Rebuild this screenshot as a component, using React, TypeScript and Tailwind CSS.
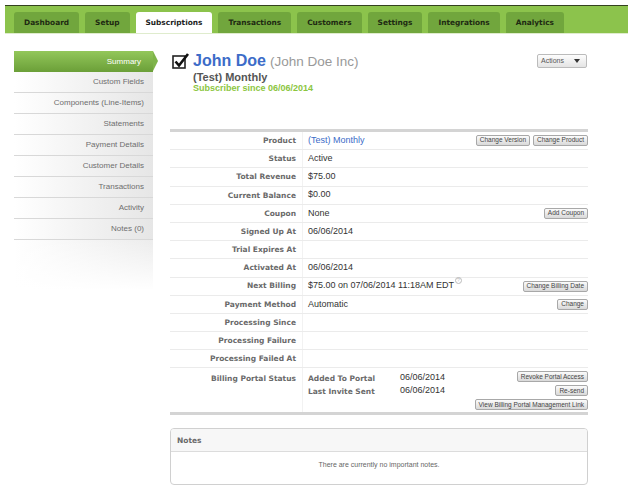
const tabs = ['Dashboard', 'Setup', 'Subscriptions', 'Transactions', 'Customers', 'Settings', 'Integrations', 'Analytics']

const sideItems = [
  'Custom Fields',
  'Components (Line-Items)',
  'Statements',
  'Payment Details',
  'Customer Details',
  'Transactions',
  'Activity',
  'Notes (0)',
]

type Row = { label: string; value?: React.ReactNode; buttons?: string[] }

function Btn({ children }: { children: React.ReactNode }) {
  return (
    <button className="h-[11px] whitespace-nowrap rounded-[2px] border border-[#a8a8a8] bg-linear-to-b from-[#fbfbfb] to-[#d9d9d9] px-[3px] font-['Liberation_Sans',sans-serif] text-[6.5px] leading-none text-[#444]">
      {children}
    </button>
  )
}

function CheckIcon() {
  return (
    <svg width="18" height="16" viewBox="0 0 18 16" className="shrink-0">
      <rect x="1" y="3" width="12" height="12" fill="#fff" stroke="#222" strokeWidth="1.6" />
      <path d="M3.5 8.5 L7 12.5 L16 1" fill="none" stroke="#111" strokeWidth="2.6" strokeLinejoin="miter" />
    </svg>
  )
}

export default function App() {
  const rows: Row[] = [
    {
      label: 'Product',
      value: <span className="text-[#3c6cc8]">(Test) Monthly</span>,
      buttons: ['Change Version', 'Change Product'],
    },
    { label: 'Status', value: 'Active' },
    { label: 'Total Revenue', value: '$75.00' },
    { label: 'Current Balance', value: '$0.00' },
    { label: 'Coupon', value: 'None', buttons: ['Add Coupon'] },
    { label: 'Signed Up At', value: '06/06/2014' },
    { label: 'Trial Expires At' },
    { label: 'Activated At', value: '06/06/2014' },
    {
      label: 'Next Billing',
      value: (
        <span className="flex items-start">
          $75.00 on 07/06/2014 11:18AM EDT
          <span className="ml-[1px] -mt-[2px] flex h-[7px] w-[7px] items-center justify-center rounded-full border border-[#bbb] text-[5px] leading-none text-[#bbb]">
            ?
          </span>
        </span>
      ),
      buttons: ['Change Billing Date'],
    },
    { label: 'Payment Method', value: 'Automatic', buttons: ['Change'] },
    { label: 'Processing Since' },
    { label: 'Processing Failure' },
    { label: 'Processing Failed At' },
  ]

  const labelCls = "font-['DejaVu_Sans',sans-serif] text-[7.5px] font-bold text-[#6a6a6a]"

  return (
    <div className="h-[499px] w-[639px] overflow-hidden bg-white font-['Liberation_Sans',Arial,sans-serif]">
      {/* top nav */}
      <div className="ml-[5px] mt-[5px] flex h-[28px] w-[623px] items-end gap-[6px] border-t border-[#34421f] bg-[#8cc34c] pl-[9px]">
        {tabs.map((t) => (
          <div
            key={t}
            className={`flex h-[21px] items-center rounded-t-[3px] px-[10px] font-['DejaVu_Sans',sans-serif] text-[7.4px] font-bold ${
              t === 'Subscriptions' ? 'bg-white text-[#222]' : 'bg-[#71a63d] text-[#1e2a12]'
            }`}
          >
            {t}
          </div>
        ))}
      </div>
      <div className="ml-[5px] h-px w-[623px] bg-[#dfeccd]" />

      <div className="mt-[17px] flex">
        {/* sidebar */}
        <div className="ml-[14px] w-[139px] shrink-0">
          <div className="relative flex h-[21px] items-center justify-end bg-linear-to-b from-[#93c75a] to-[#6b9f38] pr-[12px] text-[8px] text-white">
            Summary
            <div className="absolute -right-[5px] top-0 h-0 w-0 border-y-[10.5px] border-l-[5px] border-y-transparent border-l-[#7fb44a]" />
          </div>
          {sideItems.map((s) => (
            <div
              key={s}
              className="flex h-[21px] items-center justify-end border-b border-[#d8d8d8] bg-[linear-gradient(to_right,#ffffff,#e6e6e6)] pr-[9px] text-[8px] text-[#6e6e6e]"
            >
              {s}
            </div>
          ))}
          <div className="h-[50px] bg-[linear-gradient(to_right,#ffffff,#ececec)]">
            <div className="h-full bg-linear-to-b from-transparent to-white" />
          </div>
        </div>

        {/* main */}
        <div className="ml-[17px] w-[418px]">
          <div className="flex h-[78px] items-start pl-[2px] pt-[2px]">
            <CheckIcon />
            <div className="ml-[3px] flex-1">
              <div className="flex items-baseline leading-none">
                <span className="text-[16px] font-bold text-[#3c6cc8]">John Doe</span>
                <span className="ml-[4px] text-[13.5px] text-[#999]">(John Doe Inc)</span>
              </div>
              <div className="mt-[3px] text-[11px] font-bold leading-none text-[#555]">(Test) Monthly</div>
              <div className="mt-[1px] text-[9px] font-bold leading-none text-[#8cc63f]">Subscriber since 06/06/2014</div>
            </div>
            <button className="mr-[1px] mt-[1px] flex h-[14px] w-[50px] items-center justify-between rounded-[2px] border border-[#bbb] bg-linear-to-b from-[#fdfdfd] to-[#e4e4e4] pl-[3px] pr-[6px] text-[7px] text-[#555]">
              Actions
              <span className="h-0 w-0 border-x-[3px] border-t-[4px] border-x-transparent border-t-[#333]" />
            </button>
          </div>

          {/* detail table */}
          <div className="border-t-[3px] border-[#d4d4d4]">
            {rows.map((r) => (
              <div key={r.label} className="flex h-[18.2px] items-center border-b border-[#ebebeb]">
                <div className={`flex h-full w-[133px] shrink-0 items-center justify-end border-r border-[#f2f2f2] pr-[6px] ${labelCls}`}>
                  {r.label}
                </div>
                <div className="flex flex-1 items-center pl-[5px] text-[9px] text-[#333]">
                  <span>{r.value}</span>
                  <div className="ml-auto flex gap-[3px]">
                    {r.buttons?.map((b) => <Btn key={b}>{b}</Btn>)}
                  </div>
                </div>
              </div>
            ))}
            <div className="flex h-[47px] border-b-[3px] border-[#d4d4d4]">
              <div className={`flex w-[133px] shrink-0 justify-end border-r border-[#f2f2f2] pr-[6px] pt-[5px] ${labelCls}`}>
                Billing Portal Status
              </div>
              <div className="relative flex-1 pl-[5px] pt-[5px]">
                <div className="flex h-[13px] items-start">
                  <span className={`w-[92px] ${labelCls}`}>Added To Portal</span>
                  <span className="text-[9px] leading-none text-[#333]">06/06/2014</span>
                </div>
                <div className="flex h-[13px] items-start">
                  <span className={`w-[92px] ${labelCls}`}>Last Invite Sent</span>
                  <span className="text-[9px] leading-none text-[#333]">06/06/2014</span>
                </div>
                <div className="absolute right-0 top-[3px] flex flex-col items-end gap-[3px]">
                  <Btn>Revoke Portal Access</Btn>
                  <Btn>Re-send</Btn>
                  <Btn>View Billing Portal Management Link</Btn>
                </div>
              </div>
            </div>
          </div>

          {/* notes */}
          <div className="mt-[13px] overflow-hidden rounded-[4px] border border-[#d0d0d0]">
            <div className="flex h-[23px] items-center border-b border-[#dcdcdc] bg-[#f7f7f7] pl-[6px]">
              <span className={labelCls}>Notes</span>
            </div>
            <div className="flex h-[32px] items-center justify-center pb-[6px] text-[7px] text-[#666]">
              There are currently no important notes.
            </div>
          </div>
        </div>
      </div>
    </div>
  )
}
